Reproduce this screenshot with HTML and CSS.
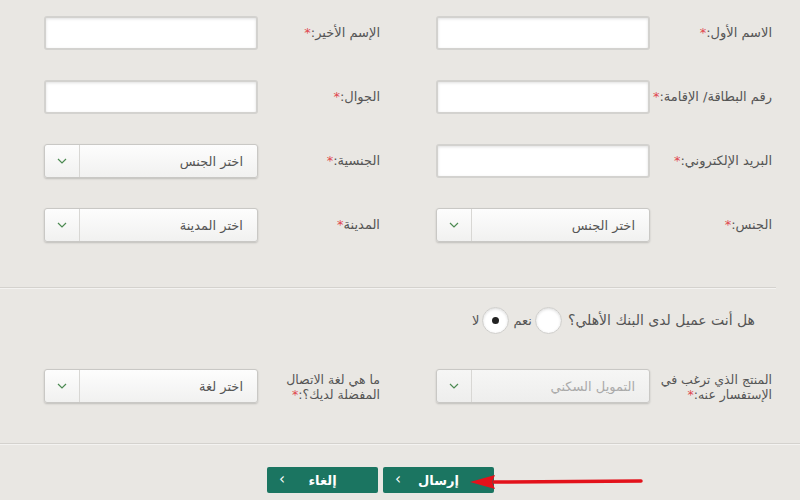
FILE: index.html
```html
<!DOCTYPE html>
<html lang="ar" dir="rtl">
<head>
    <meta charset="UTF-8">
    <meta name="viewport" content="width=device-width, initial-scale=1.0">
    <title>نموذج التواصل</title>
    <link rel="stylesheet" href="styles.css">
</head>
<body>
    <form class="form">
        <div class="form-grid">
            <div class="field">
                <label>الاسم الأول:<span class="req">*</span></label>
                <input type="text" class="text-input">
            </div>
            <div class="field">
                <label>الإسم الأخير:<span class="req">*</span></label>
                <input type="text" class="text-input">
            </div>
            <div class="field">
                <label>رقم البطاقة/ الإقامة:<span class="req">*</span></label>
                <input type="text" class="text-input">
            </div>
            <div class="field">
                <label>الجوال:<span class="req">*</span></label>
                <input type="text" class="text-input">
            </div>
            <div class="field">
                <label>البريد الإلكتروني:<span class="req">*</span></label>
                <input type="text" class="text-input">
            </div>
            <div class="field">
                <label>الجنسية:<span class="req">*</span></label>
                <div class="select">
                    <select><option>اختر الجنس</option></select>
                    <span class="select-arrow"><svg width="10" height="6" viewBox="0 0 10 6"><path d="M1 1l4 4 4-4" fill="none" stroke="#4c8a52" stroke-width="1.2"/></svg></span>
                </div>
            </div>
            <div class="field">
                <label>الجنس:<span class="req">*</span></label>
                <div class="select">
                    <select><option>اختر الجنس</option></select>
                    <span class="select-arrow"><svg width="10" height="6" viewBox="0 0 10 6"><path d="M1 1l4 4 4-4" fill="none" stroke="#4c8a52" stroke-width="1.2"/></svg></span>
                </div>
            </div>
            <div class="field">
                <label>المدينة<span class="req">*</span></label>
                <div class="select">
                    <select><option>اختر المدينة</option></select>
                    <span class="select-arrow"><svg width="10" height="6" viewBox="0 0 10 6"><path d="M1 1l4 4 4-4" fill="none" stroke="#4c8a52" stroke-width="1.2"/></svg></span>
                </div>
            </div>
        </div>

        <hr class="divider short">

        <div class="radio-row">
            <span class="question">هل أنت عميل لدى البنك الأهلي؟</span>
            <label class="radio"><input type="radio" name="client"><span>نعم</span></label>
            <label class="radio"><input type="radio" name="client" checked><span>لا</span></label>
        </div>

        <div class="form-grid second">
            <div class="field">
                <label class="two-line"><span class="line">المنتج الذي ترغب في</span><span class="line">الإستفسار عنه:<span class="req">*</span></span></label>
                <div class="select muted">
                    <select><option>التمويل السكني</option></select>
                    <span class="select-arrow"><svg width="10" height="6" viewBox="0 0 10 6"><path d="M1 1l4 4 4-4" fill="none" stroke="#4c8a52" stroke-width="1.2"/></svg></span>
                </div>
            </div>
            <div class="field">
                <label class="two-line"><span class="line">ما هي لغة الاتصال</span><span class="line">المفضلة لديك؟:<span class="req">*</span></span></label>
                <div class="select">
                    <select><option>اختر لغة</option></select>
                    <span class="select-arrow"><svg width="10" height="6" viewBox="0 0 10 6"><path d="M1 1l4 4 4-4" fill="none" stroke="#4c8a52" stroke-width="1.2"/></svg></span>
                </div>
            </div>
        </div>

        <hr class="divider">

        <div class="actions">
            <button type="button" class="btn">إرسال<span class="chev">›</span></button>
            <button type="button" class="btn">إلغاء<span class="chev">›</span></button>
            <svg class="pointer" width="180" height="16" viewBox="0 0 180 16">
                <path d="M26 8 L173 7" stroke="#e3121b" stroke-width="3.5" stroke-linecap="round"/>
                <path d="M2 8 L27 1 L24 8 L27 15 Z" fill="#e3121b"/>
            </svg>
        </div>
    </form>
</body>
</html>
```

FILE: styles.css
```css
body {
    margin: 0;
    background-color: #e9e7e3;
    font-family: "DejaVu Sans", "Noto Sans", sans-serif;
    font-size: 13px;
    color: #555;
}

.form {
    width: 800px;
    padding-top: 16px;
}

.form-grid {
    display: grid;
    grid-template-columns: 392px 392px;
    row-gap: 30px;
}

.field {
    display: flex;
    align-items: center;
    padding-right: 28px;
}

.field label {
    width: 122px;
    flex-shrink: 0;
    line-height: 16px;
    white-space: nowrap;
}

.field label.two-line {
    display: flex;
    flex-direction: column;
    font-size: 12.5px;
    line-height: 15px;
    margin-top: 2px;
}

.req {
    color: #e0484f;
}

.text-input {
    width: 214px;
    height: 34px;
    box-sizing: border-box;
    border: 2px solid #d3d2cf;
    border-radius: 3px;
    background-color: #fff;
    box-shadow: inset 0 1px 3px rgba(0, 0, 0, 0.12);
    margin: 0;
}

.select {
    width: 214px;
    height: 34px;
    box-sizing: border-box;
    display: flex;
    border: 1px solid #c9c8c5;
    border-radius: 3px;
    background: linear-gradient(#fdfdfd, #f1f1f0);
    box-shadow: 0 1px 2px rgba(0, 0, 0, 0.18);
}

.select select {
    flex: 1;
    appearance: none;
    border: none;
    background: transparent;
    font-family: inherit;
    font-size: 13px;
    color: #555;
    padding: 0 14px 0 0;
    margin: 0;
}

.select-arrow {
    width: 34px;
    border-right: 1px solid #d8d7d4;
    display: flex;
    align-items: center;
    justify-content: center;
}

.select.muted {
    background: linear-gradient(#f6f6f5, #eeeeed);
}

.select.muted select {
    color: #aaa;
}

.divider {
    margin: 40px 0 0 0;
    border: none;
    height: 1px;
    background-color: #d4d2ce;
    border-bottom: 1px solid #f4f3f1;
}

.divider.short {
    margin: 45px 24px 0 0;
}

.radio-row {
    display: flex;
    align-items: center;
    height: 30px;
    margin-top: 16px;
    padding-right: 45px;
}

.question {
    font-size: 14px;
    margin-left: 6px;
}

.radio {
    display: flex;
    align-items: center;
    gap: 3px;
    margin-left: 4px;
    font-size: 13px;
}

.radio input {
    appearance: none;
    width: 27px;
    height: 27px;
    margin: 0;
    border-radius: 50%;
    border: 1px solid #cfcecb;
    background: #fff;
    box-shadow: inset 0 1px 3px rgba(0, 0, 0, 0.15);
    display: flex;
    align-items: center;
    justify-content: center;
}

.radio input:checked::after {
    content: "";
    width: 7px;
    height: 7px;
    border-radius: 50%;
    background-color: #222;
}

.form-grid.second {
    margin-top: 34px;
}

.actions {
    display: flex;
    gap: 5px;
    margin-top: 22px;
    padding-right: 306px;
    position: relative;
}

.btn {
    width: 111px;
    height: 26px;
    border: none;
    border-radius: 2px;
    background-color: #1b7561;
    color: #fff;
    font-family: inherit;
    font-size: 13px;
    font-weight: bold;
    display: flex;
    align-items: center;
    justify-content: center;
    position: relative;
    padding: 0;
}

.chev {
    position: absolute;
    left: 12px;
    top: 3px;
    font-size: 15px;
    font-weight: normal;
}

.pointer {
    position: absolute;
    left: 468px;
    top: 7px;
}
```
